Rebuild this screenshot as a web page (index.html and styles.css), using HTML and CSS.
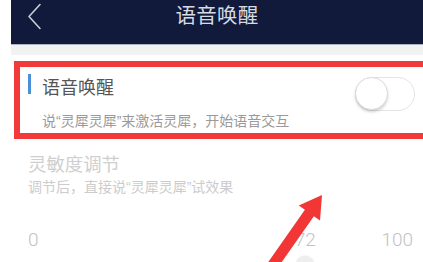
FILE: index.html
```html
<!DOCTYPE html>
<html lang="zh-CN">
<head>
<meta charset="utf-8">
<title>语音唤醒</title>
<link rel="stylesheet" href="styles.css">
</head>
<body>
<div class="page">
  <header class="header">
    <svg class="back" width="16" height="28" viewBox="0 0 16 28"><polyline points="13,1.5 2,13.5 13,25.5" fill="none" stroke="#c9ccd6" stroke-width="1.6" stroke-linecap="round" stroke-linejoin="round"/></svg>
    <div class="title">语音唤醒</div>
    <div class="spacer"></div>
  </header>
  <div class="strip"></div>
  <section class="card">
    <div class="card-text">
      <div class="card-title"><span class="bar"></span><span>语音唤醒</span></div>
      <div class="card-sub">说“灵犀灵犀”来激活灵犀，开始语音交互</div>
    </div>
    <div class="toggle"><span class="knob"></span></div>
  </section>
  <section class="sens">
    <div class="sens-title">灵敏度调节</div>
    <div class="sens-sub">调节后，直接说“灵犀灵犀”试效果</div>
    <div class="scale">
      <span>0</span>
      <span class="value" style="left:72%">72</span>
      <span>100</span>
    </div>
    <div class="track">
      <span class="thumb" style="left:72%"></span>
    </div>
  </section>
</div>
<svg class="arrow" width="423" height="262" viewBox="0 0 423 262">
  <polygon points="322,195 320,220.5 313.9,216.2 273.7,273.5 264.7,267.1 304.9,209.8 298.8,205.5" fill="#f23636"/>
</svg>
</body>
</html>
```

FILE: styles.css
```css
html, body {
  margin: 0;
  padding: 0;
}
body {
  width: 423px;
  height: 262px;
  overflow: hidden;
  background: #ffffff;
  position: relative;
  font-family: "Liberation Sans", "Noto Sans CJK SC", sans-serif;
}
.page {
  margin-left: 11px;
}
.header {
  height: 45px;
  background: #111a3b;
  display: grid;
  grid-template-columns: 1fr auto 1fr;
  align-items: start;
  border-bottom: 1px solid #aeb3c4;
  box-sizing: border-box;
}
.back {
  margin-left: 16px;
  margin-top: 3px;
}
.title {
  color: #d8dae2;
  font-size: 20.5px;
  line-height: 28px;
  padding-top: 2px;
  letter-spacing: 0.3px;
}
.strip {
  height: 10px;
  background: #f2f2f3;
}
.card {
  margin-top: 6px;
  margin-left: 3px;
  width: 430px;
  height: 78px;
  box-sizing: border-box;
  border: 6px solid #f23a3a;
  display: flex;
  align-items: flex-start;
}
.card-text {
  flex: 1;
  padding: 6px 0 0 8px;
}
.card-title {
  display: flex;
  align-items: center;
  height: 21px;
  font-size: 18px;
  color: #555555;
}
.bar {
  width: 3px;
  height: 20px;
  background: #4a90d9;
  margin-right: 11px;
}
.card-title span:last-child {
  margin-top: 4px;
}
.card-sub {
  margin-top: 18px;
  margin-left: 14px;
  font-size: 14px;
  line-height: 18px;
  color: #9a9a9a;
}
.toggle {
  margin-top: 10px;
  margin-right: 23px;
  width: 60px;
  height: 34px;
  box-sizing: border-box;
  border: 1.5px solid #e4e4e4;
  border-radius: 17px;
  background: #ffffff;
  position: relative;
}
.knob {
  position: absolute;
  left: -1px;
  top: -1px;
  width: 33px;
  height: 33px;
  box-sizing: border-box;
  border-radius: 50%;
  background: #ffffff;
  border: 1px solid #dcdcdc;
  box-shadow: 0 2px 3px rgba(0,0,0,0.18);
}
.sens {
  margin-left: 17px;
  margin-right: 10px;
  padding-top: 14px;
}
.sens-title {
  font-size: 18.4px;
  line-height: 24px;
  color: #cfcfcf;
}
.sens-sub {
  margin-top: 1px;
  font-size: 14px;
  line-height: 18px;
  color: #cccccc;
}
.scale {
  margin-top: 33px;
  display: flex;
  justify-content: space-between;
  position: relative;
  font-family: "Roboto", "Liberation Sans", sans-serif;
  font-weight: 300;
  font-size: 19px;
  line-height: 22px;
  color: #c2c2c2;
}
.value {
  position: absolute;
  top: 0;
  transform: translateX(-50%);
}
.track {
  position: relative;
  height: 6px;
  margin-top: 4px;
}
.thumb {
  position: absolute;
  top: 1px;
  width: 18px;
  height: 18px;
  border-radius: 50%;
  transform: translateX(-50%);
  background: #eeeeee;
  box-shadow: 0 0 2px rgba(0,0,0,0.15);
}
.arrow {
  position: absolute;
  left: 0;
  top: 0;
  pointer-events: none;
}
```
